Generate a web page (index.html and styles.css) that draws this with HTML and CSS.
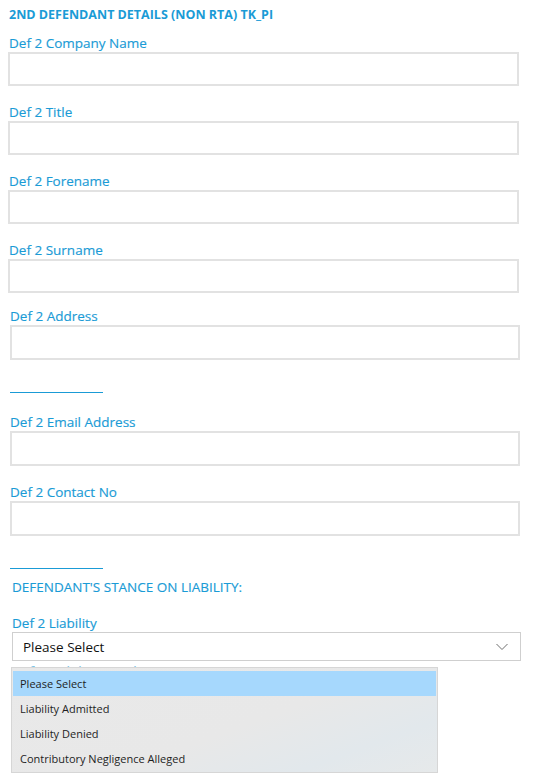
FILE: index.html
```html
<!DOCTYPE html>
<html>
<head>
<meta charset="utf-8">
<link rel="stylesheet" href="styles.css">
</head>
<body>
<div class="page">
  <h1 class="title">2ND DEFENDANT DETAILS (NON RTA) TK_PI</h1>
  <div class="section first">
    <div class="field"><label class="label">Def 2 Company Name</label><div class="input"></div></div>
    <div class="field"><label class="label">Def 2 Title</label><div class="input"></div></div>
    <div class="field"><label class="label">Def 2 Forename</label><div class="input"></div></div>
    <div class="field"><label class="label">Def 2 Surname</label><div class="input"></div></div>
  </div>
  <div class="section second">
    <div class="field"><label class="label">Def 2 Address</label><div class="input tall"></div></div>
    <div class="rule"></div>
    <div class="field"><label class="label">Def 2 Email Address</label><div class="input tall"></div></div>
    <div class="field"><label class="label">Def 2 Contact No</label><div class="input tall"></div></div>
    <div class="rule"></div>
  </div>
  <div class="section third">
    <div class="subhead">DEFENDANT'S STANCE ON LIABILITY:</div>
    <div class="field"><label class="label">Def 2 Liability</label>
      <div class="select"><span>Please Select</span>
        <svg class="chev" width="12" height="8" viewBox="0 0 12 8"><path d="M0.5 1 L6 6.5 L11.5 1" fill="none" stroke="#6f6f6f" stroke-width="1"/></svg>
      </div>
    </div>
    <div class="peek"><label class="label">Def 2 Liability Details</label></div>
    <ul class="popup">
      <li class="opt selected">Please Select</li>
      <li class="opt">Liability Admitted</li>
      <li class="opt">Liability Denied</li>
      <li class="opt">Contributory Negligence Alleged</li>
    </ul>
  </div>
</div>
</body>
</html>
```
FILE: styles.css
```css
html, body { margin: 0; padding: 0; background: #fff; }
body { font-family: "Open Sans", "Noto Sans", sans-serif; }
.page { position: relative; width: 550px; height: 781px; overflow: hidden; }
.title {
  margin: 0; padding: 6px 0 0 9px;
  font-size: 12.5px; font-weight: 700; line-height: 17px;
  color: #1a9bd6; letter-spacing: 0;
}
.section.first { padding: 12px 31px 0 8px; }
.section.second { padding: 0 30px 0 10px; }
.section.third { padding: 0 29px 0 12px; position: relative; }
.field { display: flex; flex-direction: column; margin-bottom: 18px; }
.section.first .field { margin-bottom: 18px; }
.section.first .field:last-child { margin-bottom: 15px; }
.label {
  font-size: 13.5px; line-height: 17px; color: #1a9bd6; padding-left: 1px;
  -webkit-text-stroke: 0.15px #1a9bd6;
}
.section.second .label { padding-left: 0; }
.input {
  height: 30px; border: 2px solid #e2e2e2; background: #fff;
}
.input.tall { height: 31px; }
.rule { width: 93px; height: 1px; background: #1a9bd6; margin: 32px 0 21px; }
.section.second .rule:last-child { margin-bottom: 10px; }
.subhead { font-size: 13.5px; line-height: 17px; color: #1a9bd6; margin-bottom: 19px; -webkit-text-stroke: 0.15px #1a9bd6; }
.section.third .label { padding-left: 0; }
.select {
  height: 27px; border: 1px solid #cfcfcf; background: #fff;
  display: flex; align-items: center; justify-content: space-between;
  padding: 0 12px 0 10px;
}
.select span { font-size: 13.5px; color: #111; }
.peek { margin-top: -14px; height: 3px; overflow: hidden; opacity: 0.6; }
.peek .label { display: block; margin-top: -2px; }
.popup {
  position: absolute; left: 11px; top: 88px; width: 425px; height: 101px;
  margin: 0; padding: 3px 0 0 0; list-style: none;
  border: 1px solid #d6d6d6;
  background: linear-gradient(160deg, #e9e9e9 0%, #e8e8e8 55%, #e2e8ec 80%, #e6e9ea 100%);
}
.opt {
  height: 25px; line-height: 25px; padding-left: 8px;
  font-size: 11px; color: #1e1e1e;
}
.opt.selected { background: #a6d8fd; margin: 0 1px; padding-left: 7px; }
```
